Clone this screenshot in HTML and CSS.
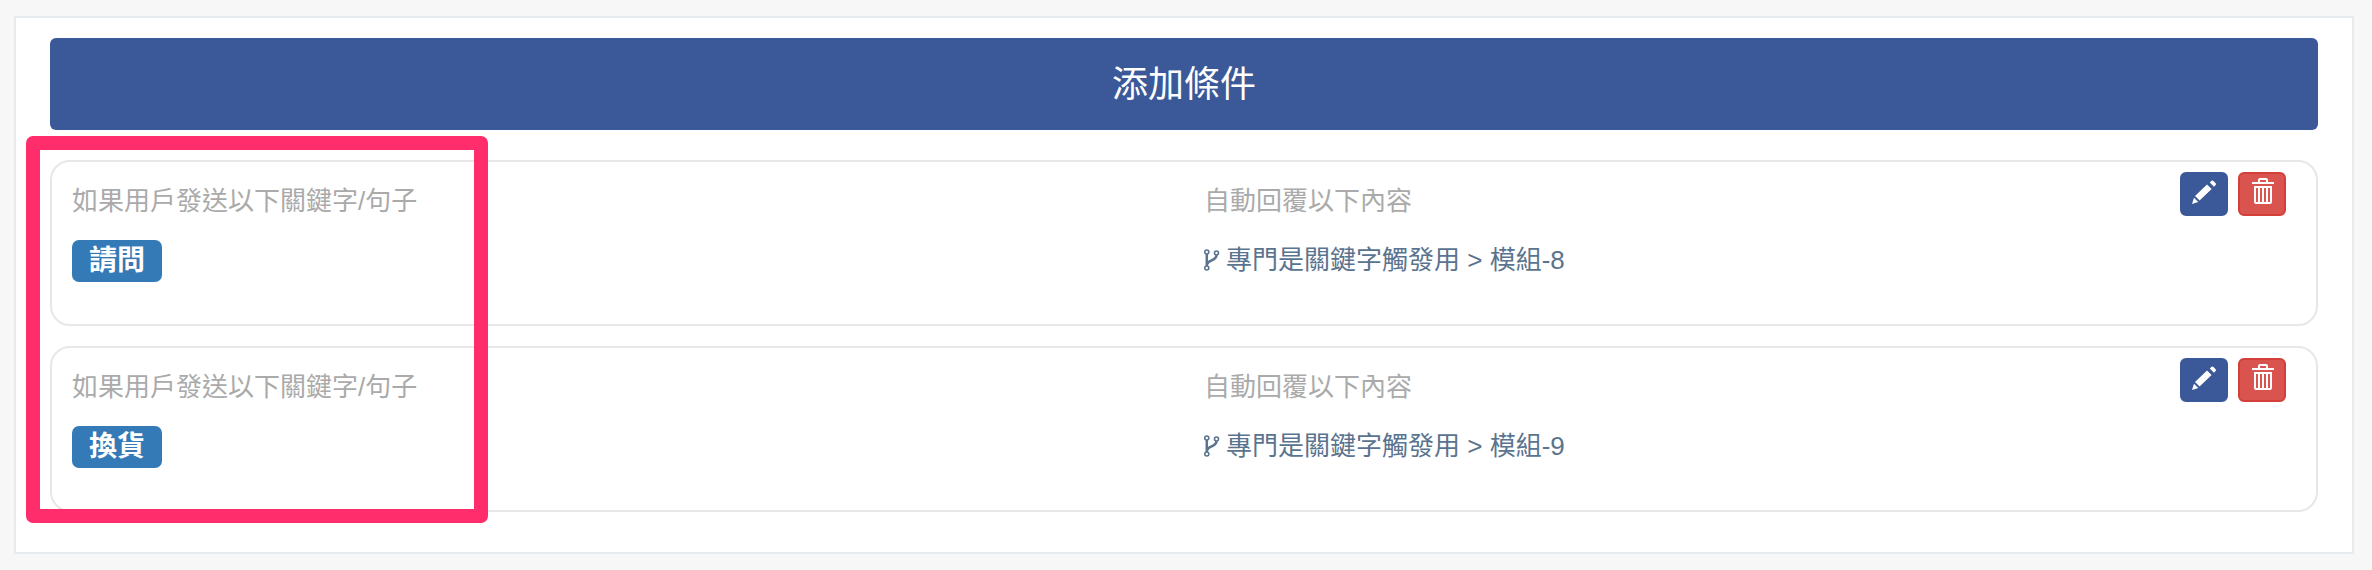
FILE: index.html
```
<!DOCTYPE html>
<html lang="zh-Hant">
<head>
<meta charset="utf-8">
<title>添加條件</title>
<link rel="stylesheet" href="styles.css">
</head>
<body>
<svg class="sprite" aria-hidden="true">
  <symbol id="fork" viewBox="0 0 16 24">
    <g fill="none" stroke="currentColor">
      <circle cx="2.800" cy="4" r="2" stroke-width="1.600"/>
      <circle cx="12.500" cy="5" r="2" stroke-width="1.600"/>
      <circle cx="2.800" cy="20" r="2" stroke-width="1.600"/>
      <path d="M2.800 6V18M12.500 7C12.500 13 4 11.500 3 16.500" stroke-width="2.500"/>
    </g>
  </symbol>
  <symbol id="pencil" viewBox="0 0 24 24">
    <path fill="currentColor" d="M0 24L2 17.800L6.300 22ZM3 16L15 4.500L19.600 9L7.600 20.500ZM17.800 2.500L19.500.800Q20.500 0 21.500 1L23.600 3.200Q24.500 4 23.600 5L22 6.800Z"/>
  </symbol>
  <symbol id="trash" viewBox="0 0 22 26">
    <g fill="none" stroke="currentColor" stroke-width="2">
      <path d="M0 5H22M7 5V2Q7 1 8 1H14Q15 1 15 2V5M3 8V24Q3 25 4 25H18Q19 25 19 24V8M2 9H20M7 9V25M11 9V25M15 9V25"/>
    </g>
  </symbol>
</svg>
<main class="panel">
  <button class="add" type="button">添加條件</button>
  <div class="rules">
    <section class="rule">
      <div class="trigger">
        <p class="caption">如果用戶發送以下關鍵字/句子</p>
        <span class="badge">請問</span>
      </div>
      <div class="reply">
        <div class="reply-text">
          <p class="caption">自動回覆以下內容</p>
          <a class="module" href="#module-8"><svg class="fork"><use href="#fork"/></svg>專門是關鍵字觸發用 &gt; 模組-8</a>
        </div>
        <div class="actions">
          <button class="action edit" type="button" aria-label="編輯"><svg class="pencil"><use href="#pencil"/></svg></button>
          <button class="action delete" type="button" aria-label="刪除"><svg class="trash"><use href="#trash"/></svg></button>
        </div>
      </div>
    </section>
    <section class="rule">
      <div class="trigger">
        <p class="caption">如果用戶發送以下關鍵字/句子</p>
        <span class="badge">換貨</span>
      </div>
      <div class="reply">
        <div class="reply-text">
          <p class="caption">自動回覆以下內容</p>
          <a class="module" href="#module-9"><svg class="fork"><use href="#fork"/></svg>專門是關鍵字觸發用 &gt; 模組-9</a>
        </div>
        <div class="actions">
          <button class="action edit" type="button" aria-label="編輯"><svg class="pencil"><use href="#pencil"/></svg></button>
          <button class="action delete" type="button" aria-label="刪除"><svg class="trash"><use href="#trash"/></svg></button>
        </div>
      </div>
    </section>
    <div class="highlight"></div>
  </div>
</main>
</body>
</html>
```
FILE: styles.css
```
* {
  box-sizing: border-box;
}

body {
  margin: 0;
  padding: 16px 18px 16px 14px;
  background: #f7f7f7;
  font-family: "Liberation Sans", "Noto Sans CJK TC", sans-serif;
  font-size: 26px;
  line-height: 36px;
}

.sprite {
  position: absolute;
  width: 0;
  height: 0;
}

.panel {
  padding: 20px 34px 40px;
  border: 2px solid #e7eaef;
  background: #fff;
}

.add {
  display: block;
  width: 100%;
  padding: 21px 20px 19px;
  border: 0;
  border-radius: 6px;
  background: #3b5998;
  color: #fff;
  font: inherit;
  font-size: 36px;
  line-height: 52px;
}

.rules {
  position: relative;
  display: flex;
  flex-direction: column;
  gap: 20px;
  margin-top: 30px;
}

.rule {
  display: grid;
  grid-template-columns: 1fr 1fr;
  gap: 40px;
  padding: 10px 20px 42px;
  border: 2px solid #e7e7e7;
  border-radius: 20px;
}

.trigger,
.reply-text {
  display: flex;
  flex-direction: column;
  align-items: flex-start;
  gap: 21px;
  padding-top: 11px;
}

.caption {
  margin: 0;
  color: #aaa;
}

.badge {
  padding: 3px 17px;
  border-radius: 7px;
  background: #337ab7;
  color: #fff;
  font-size: 28px;
  font-weight: 700;
}

.reply {
  display: flex;
  justify-content: space-between;
  align-items: flex-start;
}

.module {
  display: flex;
  align-items: center;
  gap: 6px;
  padding-top: 2px;
  color: #5a738e;
  text-decoration: none;
}

.fork {
  width: 16px;
  height: 24px;
}

.actions {
  display: flex;
  gap: 10px;
  margin-right: 10px;
}

.action {
  display: flex;
  justify-content: center;
  width: 48px;
  height: 44px;
  padding: 6px 0 0;
  border: 2px solid #3b5998;
  border-radius: 6px;
  background: #3b5998;
  color: #fff;
}

.delete {
  padding: 4px 0 0 2px;
  border-color: #d43f3a;
  background: #d9534f;
}

.pencil {
  width: 24px;
  height: 24px;
}

.trash {
  width: 22px;
  height: 26px;
}

.highlight {
  position: absolute;
  top: -24px;
  bottom: -11px;
  left: -24px;
  width: 462px;
  border: 14px solid #ff2d6b;
  border-radius: 7px;
  pointer-events: none;
}
```
